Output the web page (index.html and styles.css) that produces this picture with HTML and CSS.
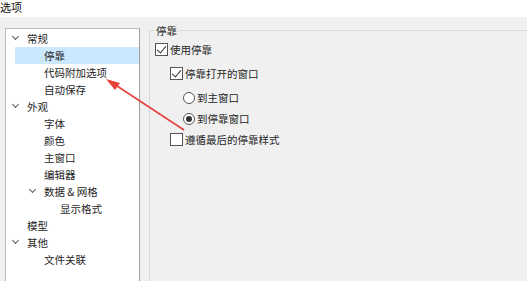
FILE: index.html
```html
<!DOCTYPE html>
<html lang="zh-CN">
<head>
  <meta charset="UTF-8" />
  <title>选项</title>
  <link rel="stylesheet" href="styles.css">
</head>
<body>
  <div class="titlebar">选项</div>

  <div class="main">
    <div class="tree">
      <div class="row"><span class="toggle open"></span>常规</div>
      <div class="row level1 selected"><span class="toggle"></span>停靠</div>
      <div class="row level1"><span class="toggle"></span>代码附加选项</div>
      <div class="row level1"><span class="toggle"></span>自动保存</div>
      <div class="row"><span class="toggle open"></span>外观</div>
      <div class="row level1"><span class="toggle"></span>字体</div>
      <div class="row level1"><span class="toggle"></span>颜色</div>
      <div class="row level1"><span class="toggle"></span>主窗口</div>
      <div class="row level1"><span class="toggle"></span>编辑器</div>
      <div class="row level1"><span class="toggle open"></span>数据 &amp; 网格</div>
      <div class="row level2"><span class="toggle"></span>显示格式</div>
      <div class="row"><span class="toggle"></span>模型</div>
      <div class="row"><span class="toggle open"></span>其他</div>
      <div class="row level1"><span class="toggle"></span>文件关联</div>
    </div>

    <div class="group">
      <span class="group-title">停靠</span>
      <div class="opt gap-big"><span class="check on"></span>使用停靠</div>
      <div class="opt sub1 gap-big"><span class="check on"></span>停靠打开的窗口</div>
      <div class="opt sub2 gap-small"><span class="radio"></span>到主窗口</div>
      <div class="opt sub2 gap-small"><span class="radio on"></span>到停靠窗口</div>
      <div class="opt sub1"><span class="check"></span>遵循最后的停靠样式</div>
    </div>
  </div>

  <svg class="arrow" width="527" height="281" viewBox="0 0 527 281">
    <line x1="184" y1="130" x2="114" y2="84" stroke="#e8413c" stroke-width="1.6" />
    <polygon points="106,79 120,83 115,90" fill="#e8413c" />
  </svg>
</body>
</html>
```

FILE: styles.css
```css
* { box-sizing: border-box; }

body {
  margin: 0;
  width: 527px;
  height: 281px;
  overflow: hidden;
  background: #f0f0f0;
  font-family: "Noto Sans CJK SC", "Noto Sans", sans-serif;
  font-size: 10.5px;
  color: #1e1e1e;
  position: relative;
}

.titlebar {
  height: 17px;
  line-height: 15px;
  background: #ffffff;
  font-size: 11px;
  color: #111;
}

.main {
  display: flex;
  align-items: flex-start;
  padding: 11px 0 0 5px;
  height: 264px;
}

/* tree */
.tree {
  width: 135px;
  height: 260px;
  background: #ffffff;
  border: 1px solid #bdbdbd;
  border-right-color: #a0a0a0;
  padding-top: 1px;
}

.row {
  display: flex;
  align-items: center;
  height: 17px;
  padding-left: 6px;
  white-space: nowrap;
}

.row.level1 { padding-left: 23px; }
.row.level2 { padding-left: 39px; }

.row.selected {
  background: linear-gradient(to right, transparent 9px, #cce8ff 9px);
}

.toggle {
  width: 15px;
  height: 17px;
  flex: none;
  position: relative;
}

.toggle.open::before {
  content: '';
  position: absolute;
  left: 1px;
  top: 4px;
  width: 4px;
  height: 4px;
  border-right: 1px solid #5a5a5a;
  border-bottom: 1px solid #5a5a5a;
  transform: rotate(45deg);
}

/* group box */
.group {
  flex: 1;
  margin: 2px 0 0 9px;
  height: 262px;
  border-top: 1px solid #d9d9d9;
  border-left: 1px solid #d9d9d9;
  position: relative;
  padding: 10px 0 0 5px;
}

.group-title {
  position: absolute;
  left: 5px;
  top: -7px;
  padding: 0 1px;
  background: #f0f0f0;
  line-height: 14px;
}

.opt {
  display: flex;
  align-items: center;
  height: 17px;
  line-height: 17px;
  white-space: nowrap;
}

.opt.sub1 { padding-left: 15px; }
.opt.sub2 { padding-left: 28px; }
.opt.gap-big { margin-bottom: 7px; }
.opt.gap-small { margin-bottom: 4px; }

.check {
  width: 13px;
  height: 13px;
  border: 1px solid #555;
  background: #fff;
  margin-right: 2px;
  flex: none;
  position: relative;
}

.check.on::after {
  content: '';
  position: absolute;
  left: 3px;
  top: 0px;
  width: 4px;
  height: 8px;
  border-right: 1.3px solid #333;
  border-bottom: 1.3px solid #333;
  transform: rotate(40deg);
}

.radio {
  width: 12px;
  height: 12px;
  border: 1px solid #555;
  border-radius: 50%;
  background: #fff;
  margin-right: 2px;
  flex: none;
  position: relative;
}

.radio.on::after {
  content: '';
  position: absolute;
  left: 2px;
  top: 2px;
  width: 6px;
  height: 6px;
  border-radius: 50%;
  background: #333;
}

.arrow {
  position: absolute;
  left: 0;
  top: 0;
  pointer-events: none;
}
```
